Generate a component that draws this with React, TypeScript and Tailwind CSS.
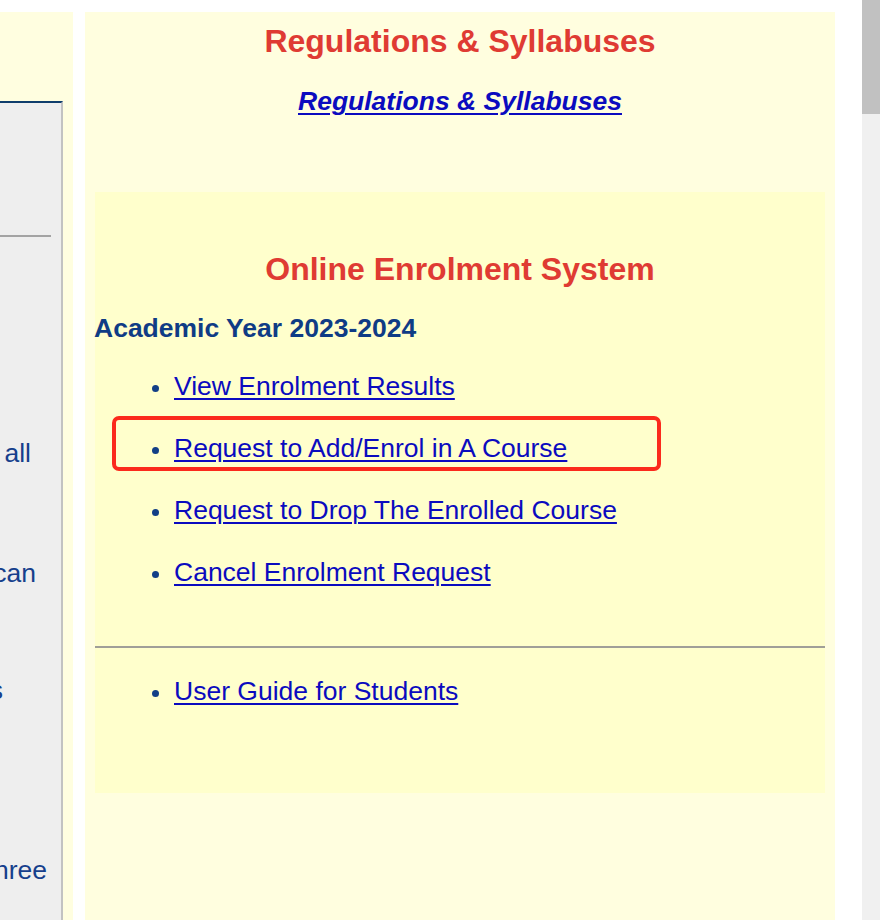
import React from "react";

const items = [
  "View Enrolment Results",
  "Request to Add/Enrol in A Course",
  "Request to Drop The Enrolled Course",
  "Cancel Enrolment Request",
];

function Bullet({ text }: { text: string }) {
  return (
    <li className="flex items-center h-[30px] pl-[57px]">
      <span className="w-[7px] h-[7px] rounded-full bg-[#123f86] mr-[15px] mt-[2px] shrink-0" />
      <a href="#" className="text-[#0b0bbf] underline decoration-[2px] underline-offset-[3px] whitespace-nowrap">
        {text}
      </a>
    </li>
  );
}

function LeftLine({ text, pr, mt }: { text: string; pr: string; mt: string }) {
  return (
    <div className={`flex justify-end h-[30px] leading-[30px] whitespace-nowrap ${pr} ${mt}`}>
      <span className="shrink-0">{text}</span>
    </div>
  );
}

export default function App() {
  return (
    <div
      className="relative w-[880px] h-[920px] bg-white overflow-hidden flex"
      style={{ fontFamily: '"Liberation Sans", Arial, sans-serif' }}
    >
      <div className="flex w-[862px] pt-[12px] h-full">
        {/* left column */}
        <div className="w-[73px] h-full bg-[#fffee0] pt-[89px]">
          <div className="w-[63px] h-full bg-[#eeeeee] border-t-2 border-t-[#0f3d6c] border-r-2 border-r-[#c2c2c2] overflow-hidden text-[26.5px] text-[#163f8c]">
            <div className="mt-[132px] h-[2px] w-[51px] bg-[#a3a3a3]" />
            <LeftLine text="all" pr="pr-[30px]" mt="mt-[201px]" />
            <LeftLine text="can" pr="pr-[25px]" mt="mt-[90px]" />
            <LeftLine text="courses" pr="pr-[58px]" mt="mt-[87px]" />
            <LeftLine text="three" pr="pr-[14px]" mt="mt-[150px]" />
          </div>
        </div>
        <div className="w-[12px]" />
        {/* main panel */}
        <div className="w-[750px] h-full bg-[#fffedf]">
          <h2 className="mt-[11px] text-center text-[32px] leading-[36px] font-bold text-[#df3b33]">
            Regulations &amp; Syllabuses
          </h2>
          <div className="mt-[27px] text-center text-[26.5px] leading-[30px]">
            <a href="#" className="font-bold italic text-[#0b0bbf] underline decoration-[2px] underline-offset-[3px]">
              Regulations &amp; Syllabuses
            </a>
          </div>
          <div className="mt-[76px] mx-[10px] bg-[#ffffcc] pt-[59px] pb-[86px]">
            <h2 className="text-center text-[32px] leading-[36px] font-bold text-[#df3b33]">
              Online Enrolment System
            </h2>
            <h3 className="mt-[26px] -ml-[1px] text-[26.5px] leading-[30px] font-bold text-[#0f3c85]">
              Academic Year 2023-2024
            </h3>
            <ul className="mt-[29px] flex flex-col gap-[32px] text-[26.5px]">
              {items.map((t) => (
                <Bullet key={t} text={t} />
              ))}
            </ul>
            <div className="mt-[58px] h-[2px] bg-[#a09f98]" />
            <ul className="mt-[29px] text-[26.5px]">
              <Bullet text="User Guide for Students" />
            </ul>
          </div>
        </div>
      </div>
      {/* scrollbar */}
      <div className="w-[18px] h-full bg-[#f0f0f0] ml-auto">
        <div className="h-[114px] bg-[#c1c1c1]" />
      </div>
      {/* annotation */}
      <div className="absolute left-[112px] top-[416px] w-[549px] h-[55px] border-[4px] border-[#fb2a1c] rounded-[7px] pointer-events-none" />
    </div>
  );
}
